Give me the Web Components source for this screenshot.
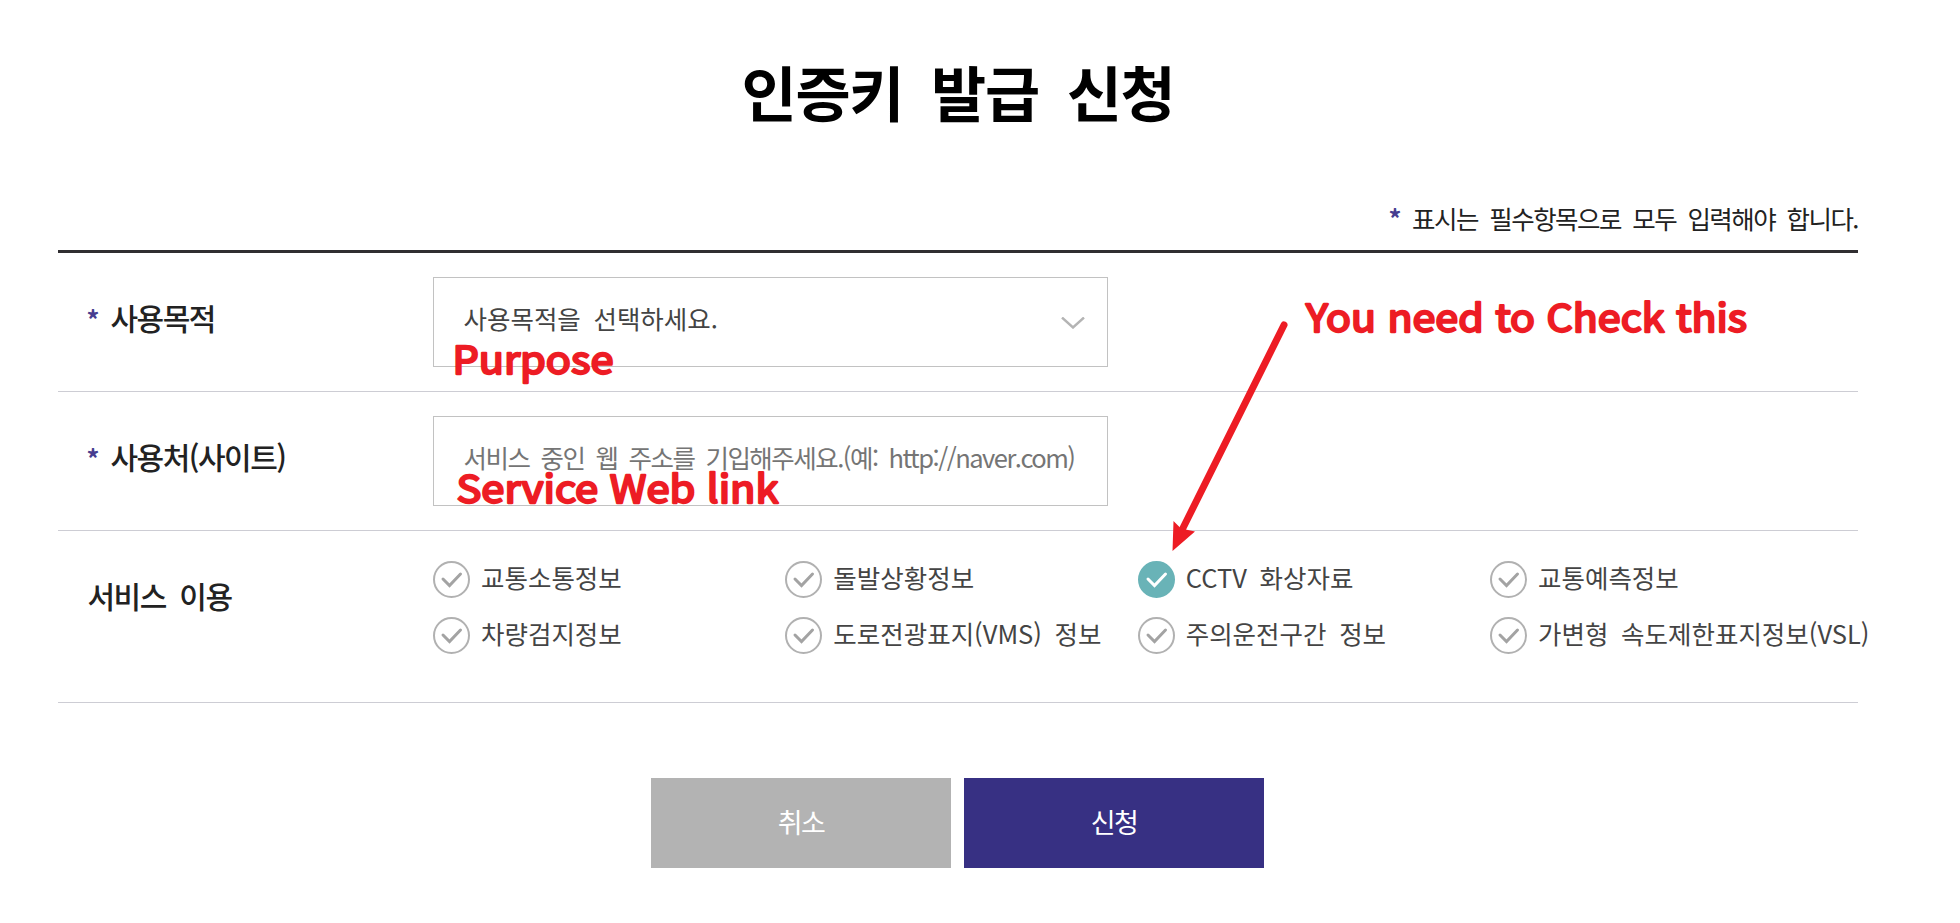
<!DOCTYPE html>
<html lang="ko">
<head>
<meta charset="utf-8">
<title>인증키 발급 신청</title>
<style>
body{margin:0;background:#fff;font-family:"Noto Sans CJK KR","Noto Sans",sans-serif;color:#222}
</style>
</head>
<body>
<key-request-page></key-request-page>
<script>
const define=(name,html)=>{
  const t=document.createElement('template');t.innerHTML=html;
  customElements.define(name,class extends HTMLElement{
    constructor(){super();this.attachShadow({mode:'open'}).append(t.content.cloneNode(true));}
  });
};

define('required-mark',`<style>
:host{display:inline-block;width:24px;margin-left:-1px;font-size:25.5px;letter-spacing:0;font-weight:700;color:#473d90;line-height:1}
</style>*`);

define('page-title',`<style>
:host{display:block;height:91px;padding-top:46px;box-sizing:content-box}
h1{margin:0;text-align:center;font-size:60px;line-height:89px;font-weight:700;letter-spacing:-1.4px;word-spacing:.212em;color:#000}
</style><h1><slot></slot></h1>`);

define('form-note',`<style>
:host{display:flex;justify-content:flex-end;height:37px;padding-top:62px;padding-bottom:14px;font-size:25.5px;line-height:37px;letter-spacing:-1.5px;word-spacing:.22em;color:#222}
p{margin:0}
required-mark{width:23.5px}
</style><p><required-mark></required-mark><slot></slot></p>`);

define('form-row',`<style>
:host{display:grid;grid-template-columns:345px 1fr;border-bottom:1px solid #cdcdd4}
.label{padding:42px 0 0 29.5px;font-size:30px;line-height:44px;font-weight:500;letter-spacing:-1.5px;word-spacing:.22em;color:#222;white-space:nowrap}
.field{padding:24px 0;margin-left:30px}
:host([options]) .field{padding:30px 0 48px}
</style><div class="label"><slot name="label"></slot></div><div class="field"><slot></slot></div>`);

define('select-box',`<style>
:host{display:flex;align-items:center;justify-content:space-between;box-sizing:border-box;width:675px;height:90px;border:1px solid #c2c2c2;padding:0 22px 9px 29.5px;font-size:25.5px;word-spacing:.216em;color:#444}
svg{margin-top:11px}
</style><span><slot></slot></span><svg width="24" height="12" viewBox="0 0 24 12" fill="none" stroke="#b4b4b4" stroke-width="2.4"><path d="M1 .5 12 10.500 23 .5"/></svg>`);

define('text-field',`<style>
:host{display:flex;align-items:center;box-sizing:border-box;width:675px;height:90px;border:1px solid #c2c2c2;padding:0 0 9px 29.5px;font-size:25.5px;letter-spacing:-1.5px;word-spacing:.213em;color:#757575;white-space:nowrap}
</style><span><slot></slot></span>`);

define('check-option',`<style>
:host{display:flex;align-items:center;gap:11px;height:37px;font-size:25.5px;word-spacing:.218em;color:#444;white-space:nowrap}
svg{flex:none}
circle{fill:#fff;stroke:#b1b1b1;stroke-width:2}
path{fill:none;stroke:#a3a3a3;stroke-width:3;stroke-linecap:round}
:host([checked]) circle{fill:#69b3b7;stroke:#69b3b7}
:host([checked]) path{stroke:#fff}
span{margin-top:-6px}
</style><svg width="37" height="37" viewBox="0 0 37 37"><circle cx="18.5" cy="18.5" r="17.5"/><path d="M10 18 16.5 24.5 27.500 13"/></svg><span><slot></slot></span>`);

define('option-grid',`<style>
:host{display:grid;grid-template-columns:repeat(4,352.35px);row-gap:19px;margin-right:-30px}
</style><slot></slot>`);

define('action-button',`<style>
button{display:block;width:300px;height:90px;border:0;padding:0 0 4px 1px;background:#b3b3b3;color:#fff;font:27px "Noto Sans CJK KR",sans-serif;letter-spacing:-1.5px}
:host([primary]) button{background:#373083}
</style><button><slot></slot></button>`);

define('note-layer',`<style>
:host{position:absolute;inset:0;pointer-events:none}
text{font:400 38.5px "Noto Sans CJK KR","Noto Sans",sans-serif;fill:#ed1c24;stroke:#ed1c24;stroke-width:2.3;stroke-linejoin:round}
</style><svg width="1960" height="923" viewBox="0 0 1960 923">
<text x="452.500" y="373.500" textLength="161" lengthAdjust="spacingAndGlyphs">Purpose</text>
<text x="456.500" y="502.500" textLength="322" lengthAdjust="spacingAndGlyphs">Service Web link</text>
<text x="1306" y="332" textLength="441" lengthAdjust="spacingAndGlyphs">You need to Check this</text>
<path d="M1284 325 1181 532" stroke="#ed1c24" stroke-width="7" stroke-linecap="round"/>
<path d="M1172.500 551 1173.500 521 1181 528.500 1195 531.500Z" fill="#ed1c24"/>
</svg>`);

define('key-request-page',`<style>
:host{display:block;position:relative;width:1960px;height:923px;overflow:hidden}
main{width:1800px;margin-left:58px}
.form{border-top:3px solid #302e31}
.actions{display:flex;justify-content:center;gap:13px;padding-top:75px;margin-left:-1px;margin-right:1px}
</style>
<main>
<page-title>인증키 발급 신청</page-title>
<form-note>표시는 필수항목으로 모두 입력해야 합니다.</form-note>
<div class="form">
<form-row><span slot="label"><required-mark></required-mark>사용목적</span><select-box>사용목적을 선택하세요.</select-box></form-row>
<form-row><span slot="label"><required-mark></required-mark>사용처(사이트)</span><text-field>서비스 중인 웹 주소를 기입해주세요.(예: http://naver.com)</text-field></form-row>
<form-row options><span slot="label">서비스 이용</span><option-grid>
<check-option>교통소통정보</check-option><check-option>돌발상황정보</check-option><check-option checked>CCTV 화상자료</check-option><check-option>교통예측정보</check-option>
<check-option>차량검지정보</check-option><check-option>도로전광표지(VMS) 정보</check-option><check-option>주의운전구간 정보</check-option><check-option>가변형 속도제한표지정보(VSL)</check-option>
</option-grid></form-row>
</div>
<div class="actions"><action-button>취소</action-button><action-button primary>신청</action-button></div>
</main>
<note-layer></note-layer>`);
</script>
</body>
</html>
